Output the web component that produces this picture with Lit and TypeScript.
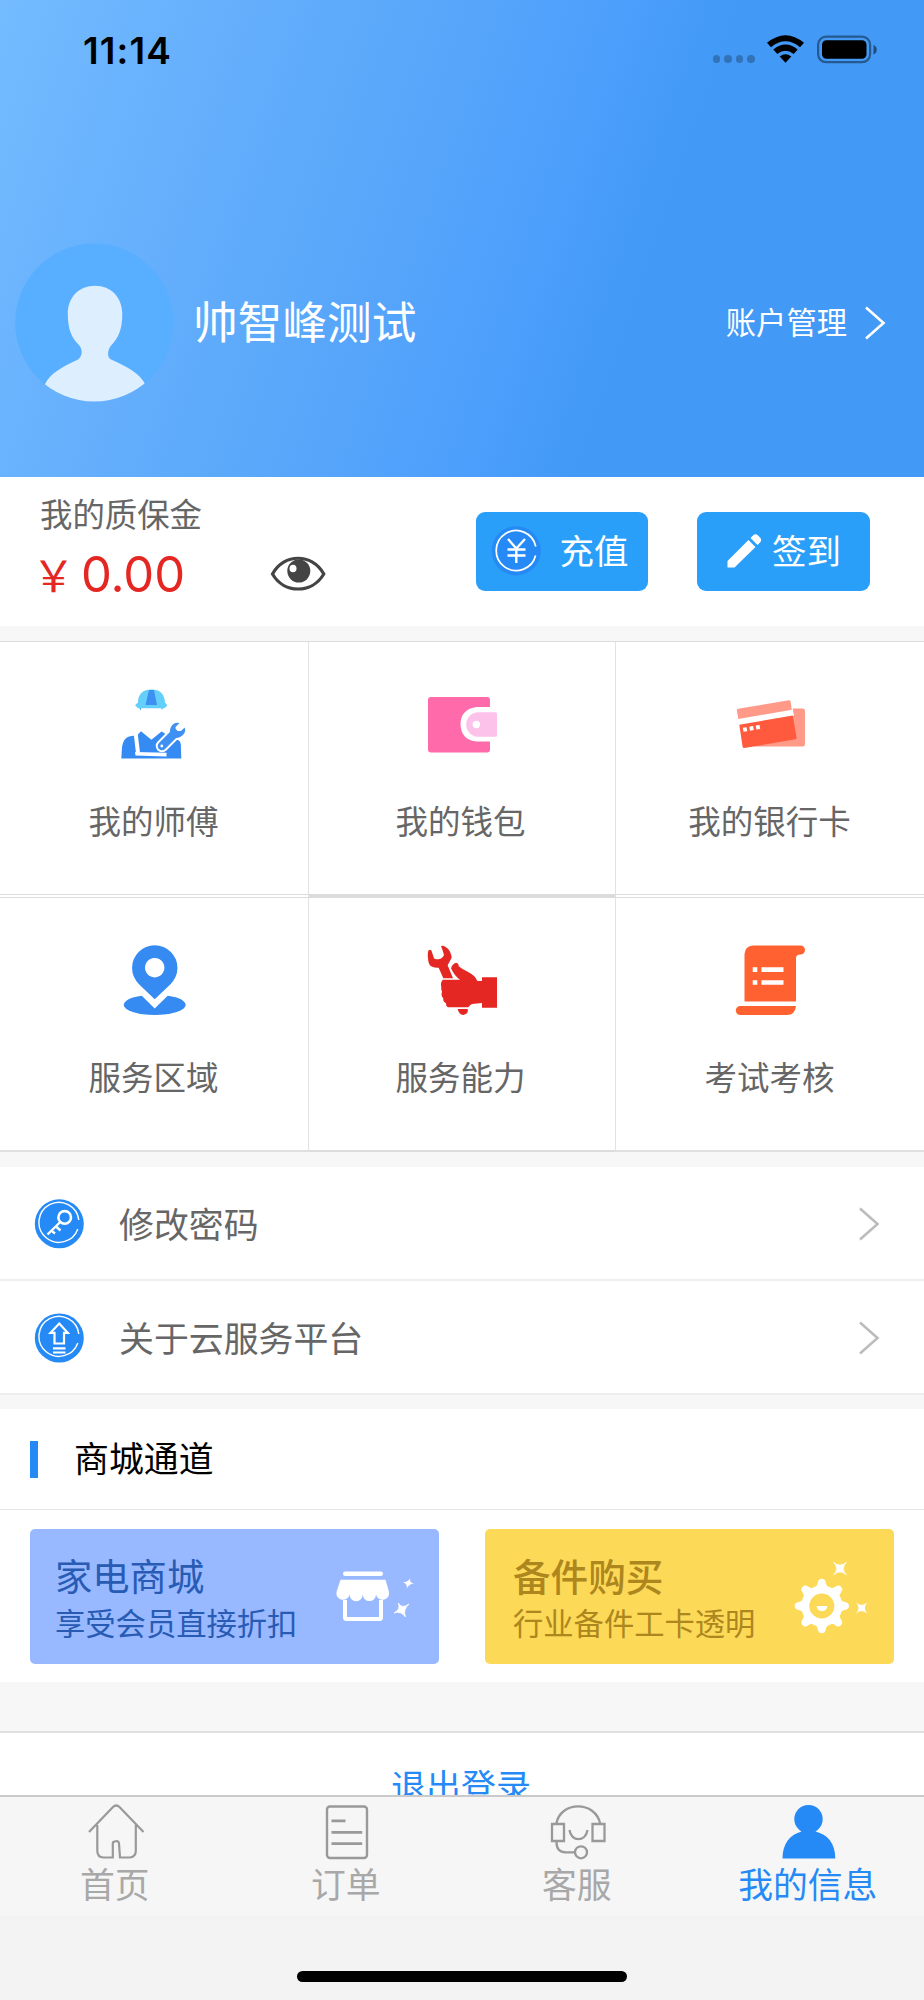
import { LitElement, html, svg, css } from "lit";
import type { SVGTemplateResult } from "lit";
import { customElement } from "lit/decorators.js";

const BLUE = "#258af6";

/* Every glyph keeps its own drawing origin: box = "x y width height". */
const icon = (box: string, body: SVGTemplateResult) => {
  const [, , w, h] = box.split(" ");
  return html`<svg class="icon" viewBox=${box} width=${w} height=${h}>${body}</svg>`;
};

const wifi = icon("766 34 40 30", svg`
  <path d="M767 42.8Q785.500 27.500 804 42.800L800 47.200Q785.500 35.500 771 47.200Z"/>
  <path d="M773.300 49.600Q785.500 39.500 797.700 49.600L793.700 54Q785.500 47.500 777.300 54Z"/>
  <path d="M779.700 56.500Q785.500 51.800 791.300 56.500L785.500 62.800Z"/>`);

const battery = icon("815 34 64 31", svg`
  <rect x="818.100" y="36.600" width="52" height="25.600" rx="8" fill="none" stroke="#000" stroke-opacity=".42" stroke-width="2.200"/>
  <rect x="822" y="40.300" width="44.500" height="18.400" rx="4.500"/>
  <path d="M873.500 45q3.200 1 3.200 4.700t-3.200 4.700z" fill-opacity=".5"/>`);

const avatar = icon("14 244 160 160", svg`
  <defs><clipPath id="face"><circle cx="94.200" cy="323.600" r="79"/></clipPath></defs>
  <circle cx="94.200" cy="323.600" r="79" fill="#58aeff"/>
  <path clip-path="url(#face)" fill="#ddeeff" d="M95 286.700C111 286.700 122.300 298 122.300 315C122.300 331 118 339 112 345.500C107.500 350 106.500 358 111 360.500C126 367 141 375 145.500 386V410H44.500V386C50 374 64 367 78 360.500C82.500 357 83 350 78.500 345.500C72 339 67.800 331 67.800 315C67.800 298 79 286.700 95 286.700Z"/>`);

const eye = icon("268 555 60 38", svg`
  <path d="M272.500 574C284 553 312 553 323.800 574C312 594 284 594 272.500 574Z" fill="#fff" stroke="#444" stroke-width="3.200"/>
  <circle cx="298.800" cy="571" r="11.500" fill="#444"/>
  <ellipse cx="293" cy="568.500" rx="3.500" ry="3.800" fill="#fff"/>`);

const yen = icon("490 526 52 52", svg`
  <circle cx="516.200" cy="551.800" r="24.600" fill=${BLUE}/>
  <path d="M535.800 547.500A20 20 0 1 0 535.600 556.500" fill="none" stroke="#fff" stroke-width="1.700"/>
  <path d="M508 540L516.300 549.500L525 540M516.300 549.500V564M507.500 550.500H525.500M507.500 556.500H525.500" fill="none" stroke="#fff" stroke-width="2.400"/>`);

const pencil = icon("725 533 38 38", svg`
  <path fill="#fff" d="M727.500 562L748.500 541L755.500 548L734.500 568.500H727.500ZM750.500 539L753.500 536Q755.500 534.500 757.500 536L760.500 539Q762 541 760.500 543L757.500 546Z"/>`);

const worker = icon("114 682 80 80", svg`
  <path fill="#3a88e8" d="M139 706h2.500l-1 4.800zM161 706h2.500l-1.500 4z"/>
  <path fill="#64cff9" d="M135 705.300L138 702.500C138 694 143 689.500 151.500 689.500C160 689.500 164.500 694 165 702.500L167.300 705.300L164.500 708.300H138Z"/>
  <path fill="#3d8ff2" d="M149 690h5L157 705H145.500Z"/>
  <path fill="#368bf3" d="M121.300 758.500L122 747Q123.500 738 129 736.500L137.500 735L141 731.300L151.400 739.800L161.500 731.500L165 733.500V740H178Q180.500 741 180.800 744L181.300 758.500Z"/>
  <path stroke="#fff" stroke-width="4" fill="none" d="M135.500 732L138 753"/>
  <path fill="#fff" d="M135 752L166.500 752.800V756.500L135.500 755.500Z"/>
  <path stroke="#fff" stroke-width="12.500" stroke-linecap="round" d="M162 746L176 732"/>
  <path fill="#fff" d="M166 728L171 722V736Z"/>
  <path stroke="#3e90f2" stroke-width="8.600" stroke-linecap="round" d="M162 746L174 734"/>
  <path fill="#3e90f2" d="M179.500 723Q173 722 170.500 728Q169 733 171 736L174 738Q181 738.500 184.500 733Q186 730 184.700 727.500L181 731H177.500L175.500 728.500V727Z"/>
  <circle cx="161.800" cy="746" r="1.400" fill="#fff"/>`);

const wallet = icon("422 682 80 80", svg`
  <rect x="428" y="697" width="62" height="55.500" rx="3" fill="#ff6aab"/>
  <path fill="#fff" d="M500 707H477Q460.500 709 460.500 724.500Q461 740 477 741.500H500Z"/>
  <path fill="#fcc2ea" d="M478.500 712.200H495.500Q497 712.200 497 713.700V735.300Q497 736.800 495.500 736.800H478.500A12.300 12.300 0 0 1 478.500 712.200Z"/>
  <circle cx="476.300" cy="724.500" r="3.700" fill="#fff"/>`);

const cards = icon("730 682 80 80", svg`
  <path fill="#ff9a88" d="M780 708.600H802.500Q805 708.600 805 711V744Q805 746.500 802.500 746.500H753L780 735Z"/>
  <path fill="#fff" d="M737 708L791 699L794 716L740 726Z"/>
  <path fill="#ff9a88" d="M738 708.800L789 700.200Q790.300 700 790.600 701.500L791.800 709.700L738.300 719L736.800 710.300Q736.800 709 738 708.800Z"/>
  <path fill="#ff5a3d" d="M739.300 724.800L792.800 715.500L796.500 737.500Q796.600 739 795.200 739.300L744.500 748Q743 748.200 742.600 746.800Z"/>
  <path fill="#fff" d="M742.800 727.800l3.800-.6.700 4-3.800.6zM749.300 726.700l3.800-.6.700 4-3.800.6zM755.700 725.500l3.800-.6.700 4-3.800.6z"/>`);

const pin = icon("114 938 80 80", svg`
  <ellipse cx="154.700" cy="1004.800" rx="31" ry="10.200" fill="#368bf3"/>
  <path fill="#fff" d="M138 992L154.700 1008.600L171.500 992Z"/>
  <path fill="#368bf3" fill-rule="evenodd" d="M154.700 999.200L139 984.200A22.700 22.700 0 1 1 170.500 984.200ZM154.700 958a9.700 9.700 0 1 0 .01 0Z"/>`);

const skill = icon("422 938 80 80", svg`
  <g transform="translate(420 935) scale(.33333)" fill="#e52724">
    <path d="M26 46Q22 52 24 70Q25 88 32 93Q42 100 56 98L70 130H99L83 91L95 68Q93 50 82 40Q72 29 63 33Q68 45 72 60Q68 70 56 73Q44 73 42 70L34 46Q30 42 26 46Z"/>
    <path d="M93 100Q97 86 108 83Q117 85 116 94Q128 104 143 110Q166 121 172 138H186V127H231V218H186V204L156 207Q150 210 145 217H84Q77 213 78 205Q68 200 70 190Q62 182 66 170Q62 162 64 156Q60 145 68 134H120Q104 124 93 100Z"/>
    <path d="M113 222H143Q146 230 141 235Q136 239 130 240Q116 238 113 222Z"/>
  </g>`);

const exam = icon("730 938 80 80", svg`
  <path fill="#ff6230" d="M753 945.500H800.500A4.500 4.500 0 0 1 800.500 954.500Q796 954.500 796 958V1001.500H744.500V954Q745 946 753 945.500ZM740.300 1006H796Q795 1015 787 1015H740.300A4.500 4.500 0 0 1 740.300 1006Z"/>
  <path fill="#fff" d="M752.700 967.300h4.600v4.600h-4.600zM761.500 967.300h22v4.600h-22zM752.700 980.200h4.600v4.600h-4.600zM761.500 980.200h22v4.600h-22z"/>`);

const key = icon("34 1199 50 50", svg`
  <circle cx="59.300" cy="1223.800" r="24.500" fill=${BLUE}/>
  <path d="M78.800 1220A20 20 0 1 0 77.800 1229" fill="none" stroke="#fff" stroke-width="1.400"/>
  <circle cx="64.700" cy="1217.400" r="6.300" fill="none" stroke="#fff" stroke-width="2.600"/>
  <path d="M60.300 1222L47.500 1234.500M56 1226.500L60.500 1230.500M51.500 1230.800L55 1233.500" fill="none" stroke="#fff" stroke-width="2.400"/>`);

const upload = icon("34 1312 50 50", svg`
  <circle cx="59.300" cy="1337" r="24.500" fill=${BLUE}/>
  <path d="M78.800 1333A20 20 0 1 0 77.800 1342" fill="none" stroke="#fff" stroke-width="1.400"/>
  <path d="M59.200 1322.500L67.800 1331.800H64V1342.500H54.500V1331.800H50.500Z" fill="none" stroke="#fff" stroke-width="2.200"/>
  <path d="M53 1347.300H65.500M53 1351.500H65.500" stroke="#fff" stroke-width="2.200"/>`);

const chevron = (color: string) => html`<svg class="icon" viewBox="0 0 24 36" width="24" height="36">
  <path d="M3 2.500L20.500 18L3 33.500" fill="none" stroke=${color} stroke-width="2.600"/></svg>`;

const store = icon("334 1560 82 66", svg`
  <g fill="#fff">
    <rect x="343" y="1571.500" width="40" height="4.500" rx="2.200"/>
    <path d="M340.500 1579.800H385.500L389 1592A6.600 6.600 0 0 1 376 1594.500A6.600 6.600 0 0 1 362.800 1594.500A6.600 6.600 0 0 1 349.500 1594.500A6.600 6.600 0 0 1 336.500 1592Z"/>
    <path d="M343 1600H347V1617H379V1600H383V1617.500Q383 1621 379.500 1621H346.500Q343 1621 343 1617.500Z"/>
    <path d="M410.300 1578Q408.800 1582.300 413.800 1583.800Q409 1583.800 406.800 1588.500Q407.800 1584 403 1582Q407.800 1582.800 410.300 1578Z"/>
    <path d="M398.300 1603Q401.800 1609.300 409 1604Q402.500 1609.800 405.500 1617Q401 1610.500 394 1613Q401 1609.500 398.300 1603Z" stroke="#fff" stroke-width=".8"/>
  </g>`);

const teeth = Array.from({ length: 8 }, (_, i) => svg`
  <path transform="rotate(${i * 45} 821.300 1605)" d="M812.500 1588C817 1585.500 817 1582.500 817.700 1580Q818.500 1577.800 821.300 1577.800T824.900 1580C825.600 1582.500 825.600 1585.500 830.100 1588Z"/>`);

const gear = icon("789.500 1555 82 80", svg`
  <g fill="#fff">
    ${teeth}
    <circle cx="821.300" cy="1605" r="16.500" fill="none" stroke="#fff" stroke-width="8"/>
    <path d="M816 1605H827Q826 1610.200 821.500 1610.200T816 1605Z"/>
    <path d="M833 1561Q839.500 1567 846 1561Q840 1567.500 846 1574Q839.500 1568 833 1574Q839 1567.500 833 1561Z" stroke="#fff" stroke-width=".5"/>
    <path d="M855.300 1601.300Q861.200 1606.600 867 1601.300Q861.600 1607 867 1612.700Q861.200 1607.400 855.300 1612.700Q860.700 1607 855.300 1601.300Z"/>
  </g>`);

const home = icon("84.500 1802 62 58", svg`
  <path fill="none" stroke="#999" stroke-width="2.200" d="M88.500 1832L112.500 1807Q115.700 1804 119 1807L143 1832M96.800 1825V1851Q97 1857.500 103 1857.500H112.300V1843Q112.500 1841.300 115 1841.300Q118.300 1840.500 118.500 1843.500L119.500 1857.500H129Q135.300 1857 135.300 1851V1825"/>`);
const order = icon("315.500 1802 62 58", svg`
  <rect x="326.500" y="1806.500" width="40" height="51.500" rx="3" fill="none" stroke="#999" stroke-width="2.400"/>
  <path d="M331 1820.800H345M331 1832.400H361.700M331 1843.600H361.700" stroke="#999" stroke-width="2.800"/>`);
const service = icon("546.500 1802 62 58", svg`
  <g fill="none" stroke="#999" stroke-width="2.300">
    <path d="M555.700 1824C560 1800.500 595 1800.500 599.800 1824M556 1842Q556 1852.300 565 1852.300H574"/>
    <path d="M551.500 1824H563.500V1841H551.500ZM592 1824H604V1841H592ZM569 1830C570.500 1842 585 1842.500 587 1830"/>
    <circle cx="580.500" cy="1852.300" r="6"/>
  </g>`);
const person = icon("777.500 1802 62 58", svg`
  <path fill=${BLUE} d="M782 1858.500C782 1843 790 1834.500 801 1831.500A14.200 14.200 0 1 1 815 1831.500C827 1834.500 834.800 1843 834.800 1858.500Z"/>`);

@customElement("app-root")
export class AppRoot extends LitElement {
  static styles = css`
    :host {
      display: flex;
      flex-direction: column;
      width: 924px;
      height: 2000px;
      overflow: hidden;
      background: #f7f7f7;
      color: #666;
      font-family: "Noto Sans CJK SC", sans-serif;
      line-height: 1;
      white-space: nowrap;
    }
    * { box-sizing: border-box; }
    .icon { display: block; flex: none; }
    .header {
      height: 477px;
      flex: none;
      background: linear-gradient(109deg, #74bcff 0%, #68b1fd 17%, #5aa8fa 38%, #4d9ffc 57%, #4299f6 68%, #4299f6 100%);
    }
    .status {
      display: flex;
      align-items: flex-start;
      height: 243px;
      padding: 34px 45px 0 83px;
    }
    .time {
      flex: 1;
      font: 600 37px/31px Inter, sans-serif;
      letter-spacing: 1.100px;
      padding-top: 1px;
      color: #000;
    }
    .dots { display: flex; gap: 4px; padding: 21px 11px 0 0; }
    .dot { width: 7.600px; height: 7.600px; border-radius: 50%; background: rgba(0, 0, 0, .25); }
    .wifi { margin-right: 9px; }
    .profile { display: flex; align-items: center; padding: 0 37px 0 14px; color: #fff; }
    .name { flex: 1; padding-left: 19px; font-size: 44.700px; line-height: 60px; margin-top: -6px; }
    .account { font-size: 30.300px; line-height: 40px; margin: -4px 16px 0 0; }

    .deposit { display: flex; height: 149px; flex: none; background: #fff; }
    .sum { width: 230px; padding: 14px 0 0 40px; }
    .sum-label { font-size: 32.400px; line-height: 44px; }
    .sum-value { display: flex; align-items: baseline; color: #e52724; margin-top: 5px; line-height: 66px; }
    .sum-yen { font-size: 43px; width: 49px; margin-left: -8px; }
    .sum-num { font: 400 49px/66px Inter, sans-serif; letter-spacing: -.100px; }
    .eye { padding: 78px 0 0 38px; width: 245.500px; }
    .btn {
      display: flex;
      align-items: center;
      width: 172.500px;
      height: 78.500px;
      margin: 35px 49px 0 0;
      border-radius: 9px;
      background: #2a9ff9;
      color: #fff;
      font-size: 34.500px;
    }
    .btn-recharge { padding-left: 14px; gap: 18px; }
    .btn-sign { padding-left: 28px; gap: 9px; margin-right: 0; }
    .btn-text { line-height: 44px; margin-top: -4px; }

    .grid {
      display: grid;
      grid-template-columns: 308px 308px 308px;
      grid-template-rows: 256px 254px;
      flex: none;
      margin-top: 15px;
      border-top: 1.500px solid #dcdcdc;
    }
    .cell {
      display: flex;
      flex-direction: column;
      align-items: center;
      background: #fff;
      padding-top: 39.500px;
      border-bottom: 2px solid #e0e0e0;
    }
    .cell-mid {
      border-left: 1.500px solid #e2e2e2;
      border-right: 1.500px solid #e2e2e2;
      border-bottom-color: #dcdcdc;
    }
    .cell-top { border-bottom: 4px double #dcdcdc; }
    .cell-top.cell-mid { border-bottom-style: solid; }
    .cell-label { font-size: 32.500px; line-height: 44px; margin: 36px 1px 0 0; }
    .cell-mid .cell-label { margin-right: 3px; }

    .list { margin-top: 15px; flex: none; background: #fff; }
    .row {
      display: flex;
      align-items: center;
      height: 114px;
      padding: 2px 43px 0 34px;
      border-bottom: 2px solid #eee;
    }
    .row-label { flex: 1; padding-left: 35px; font-size: 34.900px; line-height: 48px; margin-top: -3px; }

    .mall { margin-top: 14px; height: 273px; flex: none; background: #fff; }
    .mall-head {
      display: flex;
      align-items: center;
      height: 101px;
      padding: 0 0 0 30px;
      border-bottom: 1.500px solid #e6e6e6;
      color: #000;
    }
    .mark { width: 7.500px; height: 37px; background: #258af6; }
    .mall-title { padding-left: 36.500px; font-size: 34.900px; line-height: 48px; margin-top: -4px; }
    .promos { display: flex; gap: 46px; padding: 19px 30px 0; }
    .promo { display: flex; width: 409px; height: 135px; border-radius: 5px; }
    .promo-blue { background: #98b8ff; color: #285bb4; }
    .promo-gold { background: #fcd957; color: #ad861e; }
    .promo-text { padding: 21px 0 0 25px; width: 304px; }
    .promo-gold .promo-text { padding-left: 28px; width: 305px; }
    .promo-title { font-size: 37.300px; line-height: 50px; }
    .promo-gold .promo-title { font-size: 37.600px; font-weight: 500; }
    .promo-sub { font-size: 30.300px; line-height: 42px; margin-top: 1px; }
    .store { padding-top: 31px; }
    .gear { padding-top: 27px; }

    .logout {
      margin-top: 49px;
      height: 64px;
      flex: none;
      overflow: hidden;
      background: #fff;
      border-top: 2px solid #e0e0e0;
      padding: 28px 2px 0 0;
      text-align: center;
      color: #258af6;
      font-size: 35px;
      line-height: 48px;
    }
    .tabs {
      display: flex;
      height: 121px;
      flex: none;
      background: #f6f6f6;
      border-top: 2px solid #cacaca;
    }
    .tab { flex: 1; display: flex; flex-direction: column; align-items: center; padding-top: 5px; color: #a8a8a8; }
    .tab-active { color: #258af6; }
    .tab-label { font-size: 34.800px; line-height: 46px; margin: 0 1.500px 0 0; }
    .safe { flex: 1; display: flex; justify-content: center; padding-top: 55px; background: #f3f3f3; }
    .bar { width: 330px; height: 11px; border-radius: 6px; background: #000; }
  `;

  private services = [
    { label: "我的师傅", glyph: worker },
    { label: "我的钱包", glyph: wallet },
    { label: "我的银行卡", glyph: cards },
    { label: "服务区域", glyph: pin },
    { label: "服务能力", glyph: skill },
    { label: "考试考核", glyph: exam },
  ];

  private rows = [
    { label: "修改密码", glyph: key },
    { label: "关于云服务平台", glyph: upload },
  ];

  private tabs = [
    { label: "首页", glyph: home },
    { label: "订单", glyph: order },
    { label: "客服", glyph: service },
    { label: "我的信息", glyph: person },
  ];

  render() {
    return html`
      <header class="header">
        <div class="status">
          <span class="time">11:14</span>
          <span class="dots">${[0, 1, 2, 3].map(() => html`<i class="dot"></i>`)}</span>
          <span class="wifi">${wifi}</span>${battery}
        </div>
        <div class="profile">
          ${avatar}
          <span class="name">帅智峰测试</span>
          <span class="account">账户管理</span>
          ${chevron("#fff")}
        </div>
      </header>
      <section class="deposit">
        <div class="sum">
          <div class="sum-label">我的质保金</div>
          <div class="sum-value"><span class="sum-yen">￥</span><span class="sum-num">0.00</span></div>
        </div>
        <div class="eye">${eye}</div>
        <div class="btn btn-recharge">${yen}<span class="btn-text">充值</span></div>
        <div class="btn btn-sign">${pencil}<span class="btn-text">签到</span></div>
      </section>
      <section class="grid">
        ${this.services.map((s, i) => html`
          <div class="cell ${i % 3 === 1 ? "cell-mid" : ""} ${i < 3 ? "cell-top" : ""}">
            ${s.glyph}<span class="cell-label">${s.label}</span>
          </div>`)}
      </section>
      <section class="list">
        ${this.rows.map((r) => html`
          <div class="row">${r.glyph}<span class="row-label">${r.label}</span>${chevron("#bcbcbc")}</div>`)}
      </section>
      <section class="mall">
        <div class="mall-head"><i class="mark"></i><span class="mall-title">商城通道</span></div>
        <div class="promos">
          <div class="promo promo-blue">
            <div class="promo-text"><div class="promo-title">家电商城</div><div class="promo-sub">享受会员直接折扣</div></div>
            <div class="store">${store}</div>
          </div>
          <div class="promo promo-gold">
            <div class="promo-text"><div class="promo-title">备件购买</div><div class="promo-sub">行业备件工卡透明</div></div>
            <div class="gear">${gear}</div>
          </div>
        </div>
      </section>
      <div class="logout">退出登录</div>
      <nav class="tabs">
        ${this.tabs.map((t, i) => html`
          <div class="tab ${i === 3 ? "tab-active" : ""}">${t.glyph}<span class="tab-label">${t.label}</span></div>`)}
      </nav>
      <div class="safe"><div class="bar"></div></div>
    `;
  }
}
